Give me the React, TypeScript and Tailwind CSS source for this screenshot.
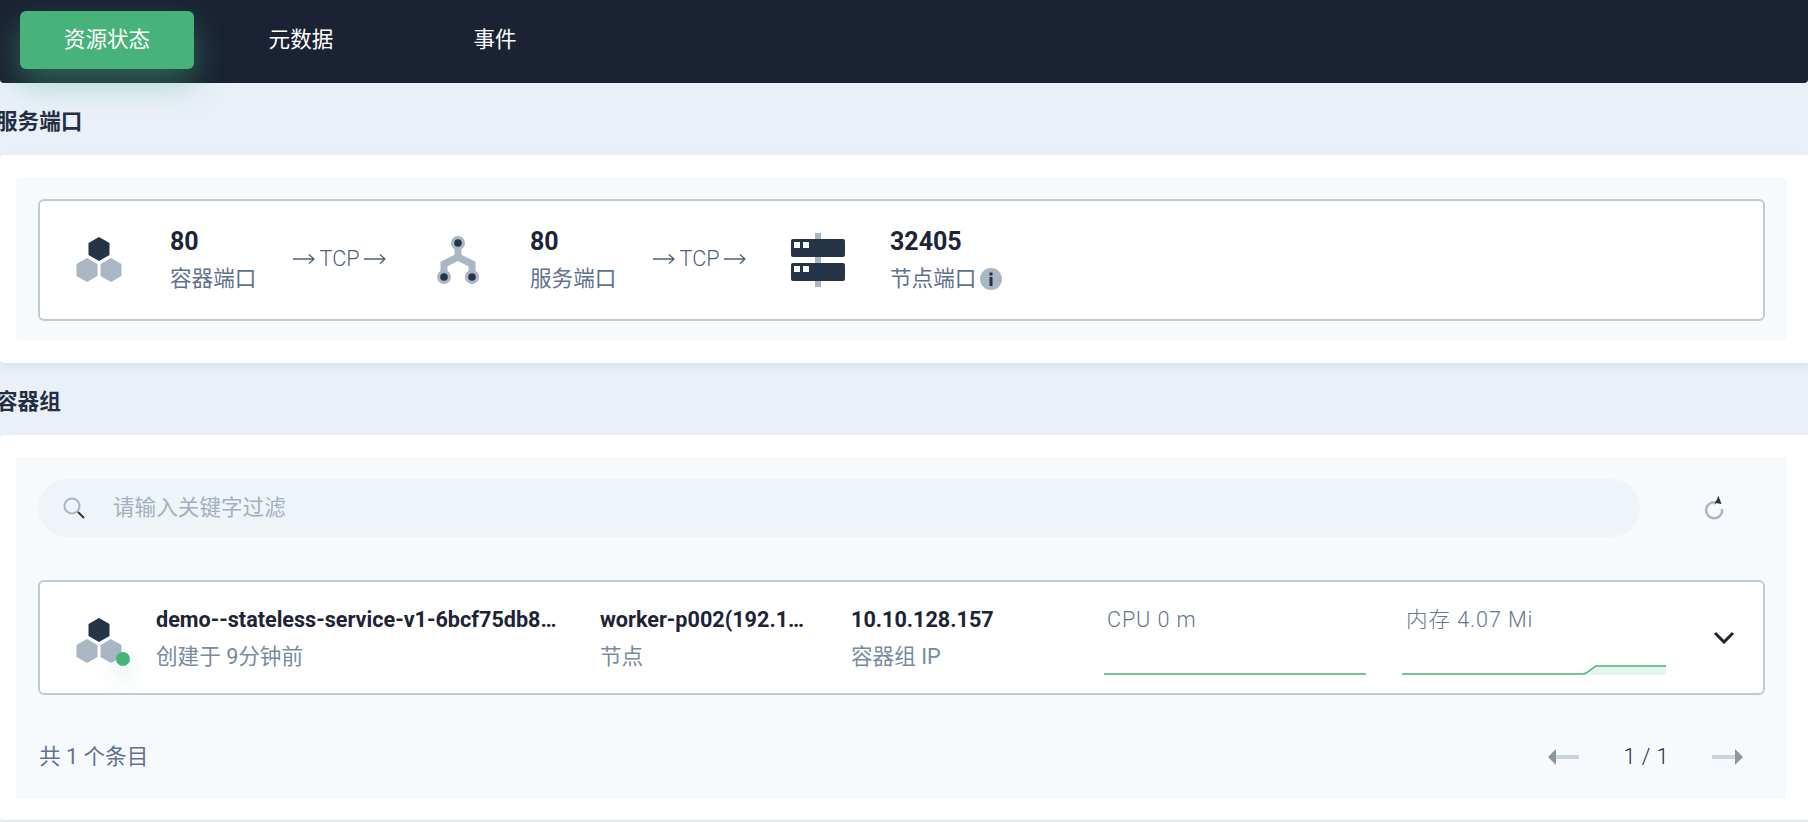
function Hex({ className = "" }: { className?: string }) {
  return (
    <svg width="46" height="46" viewBox="0 0 46 46" className={className}>
      <path d="M23 0l10.500 6v12L23 24 12.500 18V6z" fill="#253447" />
      <path d="M11 21l10.500 6v12L11 45 .5 39V27z" fill="#a9b6c4" />
      <path d="M35 21l10.500 6v12L35 45l-10.500-6V27z" fill="#a9b6c4" />
    </svg>
  );
}

function Fork() {
  return (
    <svg width="42" height="48" viewBox="0 0 42 48">
      <path d="M21 7v14L7 28v13M21 21l14 7v13" fill="none" stroke="#a9b6c4" strokeWidth="7" />
      <circle cx="21" cy="7" r="7" fill="#a9b6c4" />
      <circle cx="7" cy="41" r="7" fill="#a9b6c4" />
      <circle cx="35" cy="41" r="7" fill="#a9b6c4" />
      <circle cx="21" cy="7" r="3.800" fill="#253447" />
      <circle cx="7" cy="41" r="3.800" fill="#253447" />
      <circle cx="35" cy="41" r="3.800" fill="#253447" />
    </svg>
  );
}

function Server() {
  return (
    <svg width="54" height="54" viewBox="0 0 54 54">
      <rect x="24" y="0" width="6" height="54" fill="#a9b6c4" />
      <rect x="0" y="6" width="54" height="18" rx="2" fill="#253447" />
      <rect x="0" y="30" width="54" height="18" rx="2" fill="#253447" />
      <rect x="3" y="9" width="6" height="6" fill="#fff" />
      <rect x="12" y="9" width="6" height="6" fill="#fff" />
      <rect x="3" y="33" width="6" height="6" fill="#fff" />
      <rect x="12" y="33" width="6" height="6" fill="#fff" />
    </svg>
  );
}

function Info() {
  return (
    <svg width="22" height="22" viewBox="0 0 22 22" className="ml-[4px]">
      <circle cx="11" cy="11" r="11" fill="#a9b6c4" />
      <rect x="9.500" y="4.500" width="3" height="3" fill="#242e42" />
      <rect x="9.500" y="9" width="3" height="9" fill="#242e42" />
    </svg>
  );
}

function PortText({ value, label, info }: { value: string; label: string; info?: boolean }) {
  return (
    <div className="w-[123px] shrink-0 whitespace-nowrap">
      <div className="h-[37px] text-[25px] leading-[37px] font-bold text-[#1c2436]">{value}</div>
      <div className="flex h-[37px] items-center text-[21.600px] leading-[37px] text-[#5f7292]">
        {label}
        {info && <Info />}
      </div>
    </div>
  );
}

function Arrow() {
  return (
    <div className="flex w-[93px] shrink-0 -translate-y-px items-center justify-between text-[21.600px] font-light text-[#4f5f7a]">
      <svg width="22" height="12" viewBox="0 0 22 12">
        <path d="M0 6h21M16 1.500l5 4.500-5 4.500" fill="none" stroke="#4f5f7a" strokeWidth="1.300" />
      </svg>
      <span>TCP</span>
      <svg width="22" height="12" viewBox="0 0 22 12">
        <path d="M0 6h21M16 1.500l5 4.500-5 4.500" fill="none" stroke="#4f5f7a" strokeWidth="1.300" />
      </svg>
    </div>
  );
}

function Section({ title }: { title: string }) {
  return (
    <div className="-ml-1 flex h-[72px] items-center pt-[6px] text-[21.600px] font-bold text-[#242e42]">{title}</div>
  );
}

function Cell({ value, label, w, vw }: { value: string; label: string; w: string; vw: string }) {
  return (
    <div className={`shrink-0 ${w}`}>
      <div className={`h-[37px] truncate text-[21.600px] leading-[37px] font-bold text-[#1c2436] ${vw}`}>{value}</div>
      <div className="h-[37px] text-[21.600px] leading-[37px] text-[#7a8aa0]">{label}</div>
    </div>
  );
}

function Pager({ flip }: { flip?: boolean }) {
  return (
    <svg width="31" height="16" viewBox="0 0 31 16" className={flip ? "-scale-x-100" : ""}>
      <rect x="8" y="6" width="23" height="4" fill="#cbd5e0" />
      <path d="M8 0v16L0 8z" fill="#8b96a3" />
    </svg>
  );
}

export default function App() {
  return (
    <div className="h-[822px] w-[1808px] overflow-hidden bg-[#eaf0f8] font-[Roboto,'Noto_Sans_CJK_SC',sans-serif]">
      <header className="relative z-10 flex h-[83px] items-start gap-5 rounded-b-[4px] bg-[#1a2233] px-5 pt-[11px] text-[21.600px] text-white">
        <div className="flex h-[58px] w-[174px] items-center justify-center rounded-[6px] bg-[#47b27a] shadow-[0_14px_32px_rgba(71,178,122,0.45)]">资源状态</div>
        <div className="flex h-[58px] w-[174px] items-center justify-center">元数据</div>
        <div className="flex h-[58px] w-[174px] items-center justify-center">事件</div>
      </header>

      <Section title="服务端口" />
      <section className="rounded-l-[4px] bg-white pt-[22px] pr-[21px] pb-[22px] pl-4 shadow-[0_4px_10px_rgba(36,46,66,0.08)]">
        <div className="rounded-[4px] bg-[#f7fafd] px-[22px] pt-[22px] pb-[20px]">
          <div className="flex h-[122px] items-center rounded-[6px] border-2 border-[#c1c9d5] bg-white pl-[36px]">
            <Hex />
            <div className="ml-[48px]"><PortText value="80" label="容器端口" /></div>
            <Arrow />
            <div className="ml-[51px] flex"><Fork /></div>
            <div className="ml-[51px]"><PortText value="80" label="服务端口" /></div>
            <Arrow />
            <div className="ml-[45px] flex"><Server /></div>
            <div className="ml-[45px]"><PortText value="32405" label="节点端口" info /></div>
          </div>
        </div>
      </section>

      <Section title="容器组" />
      <section className="h-[386px] rounded-l-[4px] border-b border-[#dfe5ec] bg-white pt-[22px] pr-[21px] pl-4">
        <div className="h-[342px] bg-[#f7fafd] px-[22px] pt-[22px]">
          <div className="flex items-center">
            <div className="flex h-[58px] w-[1602px] items-center rounded-full bg-[#eff4f9] pl-[25px]">
              <svg width="22" height="22" viewBox="0 0 22 22">
                <circle cx="9" cy="9" r="7.500" fill="none" stroke="#a9b6c4" strokeWidth="2" />
                <path d="M15 15l6 6" stroke="#253447" strokeWidth="2" />
              </svg>
              <span className="ml-[28px] text-[21.600px] text-[#a4b0c0]">请输入关键字过滤</span>
            </div>
            <svg width="20" height="24" viewBox="0 0 20 24" className="ml-[64px]">
              <path d="M13 6.800A8 8 0 1 0 18 13" fill="none" stroke="#a9b6c4" strokeWidth="2.500" />
              <path d="M14.500 0l3 8-5.500-1-2 2z" fill="#253447" />
            </svg>
          </div>

          <div className="mt-[43px] flex h-[115px] items-center rounded-[6px] border-2 border-[#c1c9d5] bg-white pl-[36px]">
            <div className="relative flex shrink-0 pt-[6px]">
              <Hex />
              <span className="absolute top-[40px] left-[40px] h-[14px] w-[14px] rounded-full bg-[#47b27a] shadow-[0_10px_20px_rgba(71,178,122,0.3)]" />
            </div>
            <div className="ml-[34px] w-[444px] shrink-0">
              <div className="h-[37px] w-[405px] truncate text-[21.600px] leading-[37px] font-bold text-[#1c2436]">demo--stateless-service-v1-6bcf75db8f-x7k2p</div>
              <div className="h-[37px] text-[21.600px] leading-[37px] text-[#7a8aa0]">创建于 9分钟前</div>
            </div>
            <Cell value="worker-p002(192.168.0.12)" label="节点" w="w-[251px]" vw="w-[208px]" />
            <Cell value="10.10.128.157" label="容器组 IP" w="w-[253px]" vw="w-[200px]" />
            <div className="w-[298px] shrink-0">
              <div className="h-[37px] pl-[3px] text-[21.600px] leading-[37px] font-light tracking-[0.9px] text-[#66768d]">CPU 0 m</div>
              <svg width="264" height="37" viewBox="0 0 264 37" className="block">
                <path d="M0 36h262" stroke="#47b27a" strokeWidth="1.500" fill="none" />
              </svg>
            </div>
            <div className="w-[311px] shrink-0">
              <div className="h-[37px] pl-[4px] text-[21.600px] leading-[37px] font-light tracking-[0.9px] text-[#66768d]">内存 4.07 Mi</div>
              <svg width="264" height="37" viewBox="0 0 264 37" className="block">
                <path d="M182 36l12-8h70v9H182z" fill="#e6f5ee" />
                <path d="M0 36h180q2 0 4-1l10-7h70" stroke="#47b27a" strokeWidth="1.500" fill="none" />
              </svg>
            </div>
            <svg width="22" height="13" viewBox="0 0 22 13">
              <path d="M2 2l9 9 9-9" fill="none" stroke="#1c2436" strokeWidth="3" />
            </svg>
          </div>

          <div className="mt-[43px] flex items-center pl-px text-[21.600px] leading-[37px] text-[#5f7292]">
            <span>共 1 个条目</span>
            <div className="ml-auto flex items-center pr-[22px] text-[#242e42]">
              <Pager />
              <span className="mr-[43px] ml-[44px] font-light tracking-[0.5px]">1 / 1</span>
              <Pager flip />
            </div>
          </div>
        </div>
      </section>
    </div>
  );
}
